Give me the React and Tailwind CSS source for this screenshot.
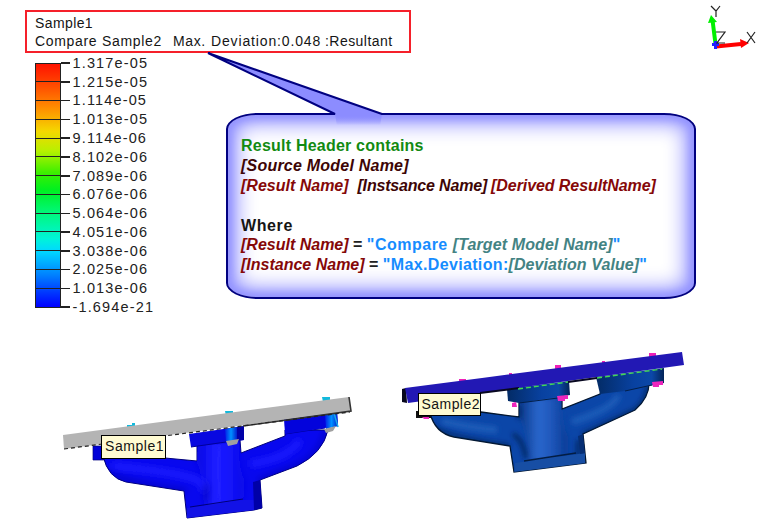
const levels = [
  '1.317e-05', '1.215e-05', '1.114e-05', '1.013e-05', '9.114e-06', '8.102e-06', '7.089e-06',
  '6.076e-06', '5.064e-06', '4.051e-06', '3.038e-06', '2.025e-06', '1.013e-06', '-1.694e-21',
];

function ResultHeader() {
  return (
    <header className="mt-[10px] ml-[25px] h-[43px] w-[386px] border-2 border-[#f5202a] pt-[2px] pl-[8px] text-[14px] leading-[18px] whitespace-pre text-[#151515]">
      <div className="tracking-[0.400px]">Sample1</div>
      <div className="flex">
        <span className="w-[138px] tracking-[0.680px]">Compare Sample2  </span>
        <span className="w-[38px] tracking-[0.600px]">Max. </span>
        <span className="w-[114px] tracking-[0.850px]">Deviation:0.048 </span>
        <span className="tracking-[0.450px]">:Resultant</span>
      </div>
    </header>
  );
}

function AxisTriad() {
  return (
    <svg className="ml-auto h-[53px] w-[77px]" viewBox="690 0 77 53" fill="none">
      <path d="M715.500 44L712.500 20" stroke="#00f000" strokeWidth="4" />
      <path d="M708 23L711 15L717 22Z" fill="#00f000" />
      <path d="M716 46.500L741 44" stroke="#f00" strokeWidth="4" />
      <path d="M740 39L749 43L741 48Z" fill="#f00" />
      <path d="M712 44.500H719M715.500 41V49" stroke="#2020ff" strokeWidth="3" />
      <path d="M711 6L716 11L720 6M716 11V17M716 32H725L717 43H725M747 32L755 43M755 32L747 43" stroke="#222" strokeWidth="1.200" />
    </svg>
  );
}

function Legend() {
  return (
    <div className="ml-[35px] flex">
      <div className="mt-[9.500px] flex h-[245px] w-[26px] flex-col border-x-[1.500px] border-b-[1.500px] border-[#222] bg-[linear-gradient(#ff1000_0%,#ff3c00_7%,#ff8a00_18%,#f4d800_28%,#b8f000_36%,#3cf000_45%,#00f020_52%,#00f880_62%,#00f4d8_72%,#00d8ff_77%,#0080ff_87%,#0038ff_94%,#0000ff_100%)]">
        {levels.slice(1).map((l) => (
          <div key={l} className="flex-1 border-t-[1.500px] border-[#222]" />
        ))}
      </div>
      <div className="flex w-[110px] flex-col pt-[0.800px] text-[14.500px] tracking-[1.150px] text-[#222]">
        {levels.map((l) => (
          <div key={l} className="flex h-[18.770px] items-center gap-[2.500px] leading-none">
            <span className="h-[1.500px] w-[9px] bg-[#222]" />
            <span>{l}</span>
          </div>
        ))}
      </div>
    </div>
  );
}

function Callout() {
  return (
    <section className="relative mt-[60px] ml-[55px] h-[186px] w-[470px] rounded-[32px/16px] border-2 border-[#000080] pt-[21px] pl-[13px] text-[16px] leading-[20px] font-bold whitespace-pre shadow-[inset_0_0_20px_9px_#9494ff,inset_0_0_8px_3px_#8888ff]">
      <svg className="absolute -top-[65px] -left-[22px] h-[86px] w-[180px]" viewBox="206 50 180 86">
        <defs>
          <linearGradient id="tail" gradientUnits="userSpaceOnUse" x1="0" y1="112" x2="0" y2="125">
            <stop offset="0.300" stopColor="#8c8cff" />
            <stop offset="1" stopColor="#8c8cff" stopOpacity="0" />
          </linearGradient>
        </defs>
        <path d="M207 53L335 114L337 126H380L382 114Z" fill="url(#tail)" />
        <path d="M330 114H335L208 53L382 114H386" fill="none" stroke="#000080" strokeWidth="2" strokeLinejoin="bevel" />
      </svg>
      <div className="relative">
        <div className="tracking-[0.220px] text-[#128a12]">Result Header contains</div>
        <div className="tracking-[0.220px] text-[#3d0505] italic">[Source Model Name]</div>
        <div className="text-[#3d0505] italic"><span className="text-[#850808]">[Result Name]</span>  <span className="tracking-[-0.180px]">[Instsance Name]</span><span className="ml-[4px] tracking-[-0.080px] text-[#850808]">[Derived ResultName]</span></div>
        <div className="mt-[20px] h-[19px] tracking-[0.600px] text-[#151515]">Where</div>
        <div className="tracking-[0.500px] text-[#168cff]"><i className="tracking-normal text-[#850808]">[Result Name]</i><span className="tracking-normal text-[#222]"> = </span>"Compare <i className="tracking-[0.120px] text-[#438383]">[Target Model Name]</i>"</div>
        <div className="tracking-[0.350px] text-[#168cff]"><i className="tracking-normal text-[#850808]">[Instance Name]</i><span className="tracking-normal text-[#222]"> = </span>"Max.Deviation:<i className="tracking-[0.080px] text-[#438383]">[Deviation Value]</i>"</div>
      </div>
    </section>
  );
}

function SampleOne() {
  return (
    <figure className="relative mt-[45px] ml-[55px] h-[133px] w-[305px]">
      <svg className="h-[133px] w-[305px]" viewBox="55 390 305 133">
        <defs>
          <linearGradient id="neck1">
            <stop stopColor="#0505e0" />
            <stop offset="0.350" stopColor="#1c1cff" />
            <stop offset="0.600" stopColor="#1818ff" />
            <stop offset="1" stopColor="#0505e4" />
          </linearGradient>
          <linearGradient id="bolt1"><stop stopColor="#0020e8" /><stop offset="0.500" stopColor="#0090ff" /><stop offset="1" stopColor="#0020d0" /></linearGradient>
          <filter id="soft1" x="-30%" y="-30%" width="160%" height="160%"><feGaussianBlur stdDeviation="3" /></filter>
          <clipPath id="body1">
            <path d="M103 456Q108 478 126 482L184 491L187 518L254 510L262 508L260 480L297 466Q323 453 328 430L285 430V436L241 453L240 440H197V461L165 458Z" />
          </clipPath>
        </defs>
        <path d="M127 425h5v-2h3v5h-8zM225 411h8v5h-7zM322 397h8v5h-7z" fill="#12b9dc" />
        <path d="M93 446H104V460H93Z" fill="#0000d8" stroke="#000080" strokeWidth="0.700" />
        <path d="M103 456Q108 478 126 482L184 491L187 518L254 510L262 508L260 480L297 466Q323 453 328 430L285 430V436L241 453L240 440H197V461L165 458Z" fill="#0808ee" stroke="#000078" strokeWidth="1" />
        <g clipPath="url(#body1)">
          <path d="M198 442H239Q238 470 246 482L243 503L206 510Q206 480 196 462Z" fill="url(#neck1)" filter="url(#soft1)" />
          <path d="M112 466Q150 469 180 475T202 492M300 440Q290 458 250 464" fill="none" stroke="#1a1aff" strokeWidth="7" filter="url(#soft1)" />
          <path d="M206 484V502M326 430Q320 455 297 466L258 481M107 472Q120 482 186 491" fill="none" stroke="#0000b0" strokeWidth="3" filter="url(#soft1)" />
          <path d="M219 447Q217 475 220 500" fill="none" stroke="#2424ff" strokeWidth="6" filter="url(#soft1)" />
        </g>
        <path d="M187 508L243 500L254 500V510L187 518Z" fill="#1212e6" />
        <path d="M190 507L243 499" fill="none" stroke="#000078" strokeWidth="1.200" />
        <path d="M253 482L260 480L262 508L254 510Z" fill="#0000a8" />
        <path d="M189 434L244 426V440L191 447Z" fill="#0808e0" />
        <path d="M225 429L237 427V441L226 442Z" fill="url(#bolt1)" />
        <path d="M237 427L244 426V440L237 441Z" fill="#0000a8" />
        <path d="M191 447L226 442M285 434L325 428" stroke="#000098" strokeWidth="1" />
        <path d="M284 419L337 411L338 426L285 434Z" fill="#0303dc" />
        <path d="M325 414L337 412L338 426L326 429Z" fill="url(#bolt1)" />
        <path d="M334 413L338 427" fill="none" stroke="#18a9e8" strokeWidth="1.500" />
        <path d="M226 441L239 439L237 444L228 446ZM324 429L336 426L333 431L326 433Z" fill="#a0a0a0" />
        <path d="M63 435L349 397L351 411L64 449Z" fill="#b4b4b4" />
        <path d="M349 397L351 411L243 426" fill="none" stroke="#333" strokeWidth="1.600" />
        <path d="M64 449L350 412" stroke="#222" strokeWidth="1.200" strokeDasharray="4 3" />
      </svg>
      <figcaption className="absolute top-[45px] left-[46px] h-[24px] w-[65px] border-[1.500px] border-black bg-[#fffbd2] pl-[3px] text-[14px] leading-[21px] tracking-[0.550px] text-[#151515]">Sample1</figcaption>
    </figure>
  );
}

function SampleTwo() {
  return (
    <figure className="relative ml-[35px] h-[133px] w-[295px]">
      <svg className="h-[133px] w-[295px]" viewBox="395 345 295 133">
        <defs>
          <linearGradient id="neck2">
            <stop stopColor="#083888" />
            <stop offset="0.400" stopColor="#2a66cc" />
            <stop offset="0.650" stopColor="#2058bc" />
            <stop offset="1" stopColor="#083a94" />
          </linearGradient>
          <linearGradient id="flange2"><stop stopColor="#032b65" /><stop offset="0.550" stopColor="#0841a0" /><stop offset="0.820" stopColor="#0b48a8" /><stop offset="1" stopColor="#032458" /></linearGradient>
          <filter id="soft2" x="-30%" y="-30%" width="160%" height="160%"><feGaussianBlur stdDeviation="2.800" /></filter>
          <clipPath id="body2">
            <path d="M430 413Q435 433 454 437L510 446L514 472L586 463L583 434L635 410Q650 397 649 381L603 386L600 394L562 409V394H519V417L481 412Z" />
          </clipPath>
        </defs>
        <path d="M459 379h7v5h-7zM509 373h3v4h-3zM555 365h6v5h-6zM602 361h3v4h-3zM649 353h7v5h-7z" fill="#ef20b8" />
        <path d="M416 411H432V418H416Z" fill="#111" />
        <path d="M430 413Q435 433 454 437L510 446L514 472L586 463L583 434L635 410Q650 397 649 381L603 386L600 394L562 409V394H519V417L481 412Z" fill="#0b46a8" stroke="#02152d" strokeWidth="1.300" />
        <g clipPath="url(#body2)">
          <path d="M521 398H560Q561 424 568 436V461H528Q530 432 519 417Z" fill="url(#neck2)" filter="url(#soft2)" />
          <path d="M442 421Q471 428 497 430M618 395Q615 408 572 422" fill="none" stroke="#1f5bb8" strokeWidth="7" filter="url(#soft2)" />
          <path d="M519 405V418M526 458Q523 440 513 434M432 425Q438 436 510 446M648 385Q647 400 635 410L582 435M578 440V458" fill="none" stroke="#022458" strokeWidth="3.500" filter="url(#soft2)" />
          <path d="M541 404V452" stroke="#3270d4" strokeWidth="7" filter="url(#soft2)" />
          <path d="M515 463L585 453V465L514 475Z" fill="#174ea4" />
          <path d="M524 461L576 453" fill="none" stroke="#031d43" strokeWidth="1.500" />
          <path d="M578 436L584 434L587 453L580 454Z" fill="#062e74" />
        </g>
        <path d="M507 389L569 381L570 395L519 403L508 401Z" fill="url(#flange2)" />
        <path d="M596 377L664 368V383L625 391L600 394Z" fill="url(#flange2)" />
        <path d="M519 403L558 398M625 391L652 385" stroke="#021f49" />
        <path d="M512 403l4 -1l1 5h-5zM557 396l11 -1v4h-3v2h-7zM652 382l11 -1v4h-4v2h-6zM422 417h7v2h-5z" fill="#ed26bc" />
        <path d="M402 389L406 388L407 403L402 402Z" fill="#07071c" />
        <path d="M405 388L482 378L682 352L684 365L408 403Z" fill="#2218b4" />
        <path d="M480 393L519 388M568 382L597 378" stroke="#080820" strokeWidth="2" />
        <path d="M518 389L568 382M597 378L662 369" stroke="#43d653" strokeWidth="1.400" strokeDasharray="5 3" />
      </svg>
      <figcaption className="absolute top-[48px] left-[23px] h-[23px] w-[63px] border-[1.500px] border-black bg-[#fffbd2] pl-[2.500px] text-[14px] leading-[20px] tracking-[0.450px] text-[#151515]">Sample2</figcaption>
    </figure>
  );
}

export default function App() {
  return (
    <main className="h-[523px] w-[767px] overflow-hidden bg-white font-['Liberation_Sans',Arial,sans-serif]">
      <div className="flex h-[53px]"><ResultHeader /><AxisTriad /></div>
      <div className="flex h-[292px] items-start"><Legend /><Callout /></div>
      <div className="flex items-start"><SampleOne /><SampleTwo /></div>
    </main>
  );
}
